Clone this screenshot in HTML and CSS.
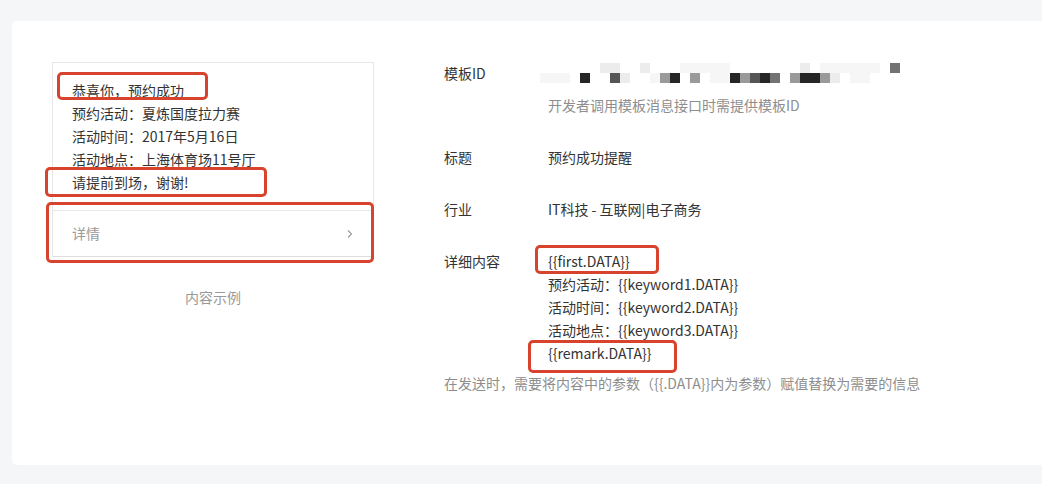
FILE: index.html
```html
<!DOCTYPE html>
<html lang="zh-CN">
<head>
<meta charset="utf-8">
<title>模板详情</title>
<link rel="stylesheet" href="styles.css">
</head>
<body>
<div class="page">
  <div class="card">
    <div class="preview-col">
      <div class="preview">
        <div class="msg">
          <div>恭喜你，预约成功</div>
          <div>预约活动：夏炼国度拉力赛</div>
          <div>活动时间：2017年5月16日</div>
          <div>活动地点：上海体育场11号厅</div>
          <div>请提前到场，谢谢!</div>
        </div>
        <div class="detail-link">
          <span>详情</span>
          <svg class="chev" width="8" height="10" viewBox="0 0 8 10"><path d="M2 1.5 L5.5 5 L2 8.5" fill="none" stroke="#9a9a9a" stroke-width="1.1"/></svg>
        </div>
      </div>
      <div class="caption">内容示例</div>
    </div>
    <div class="info">
      <div class="row">
        <div class="label">模板ID</div>
        <div class="value">
          <div class="mosaic">
            <div class="mrow">
              <i class="w"></i><i class="w"></i><i class="w"></i><i class="w"></i><i class="w"></i><i class="w"></i><i class="l2"></i><i class="l2"></i><i class="w"></i><i class="w"></i><i class="l2"></i><i class="w"></i><i class="w"></i><i class="w"></i><i class="l1"></i><i class="l1"></i><i class="l1"></i><i class="l1"></i><i class="l1"></i><i class="w"></i><i class="w"></i><i class="w"></i><i class="w"></i><i class="w"></i><i class="w"></i><i class="w"></i><i class="l2"></i><i class="w"></i><i class="l1"></i><i class="l1"></i><i class="l1"></i><i class="l1"></i><i class="l1"></i><i class="l1"></i><i class="w"></i><i class="d3"></i>
            </div>
            <div class="mrow">
              <i class="l1"></i><i class="l1"></i><i class="l1"></i><i class="w"></i><i class="d1"></i><i class="w"></i><i class="w"></i><i class="d2"></i><i class="l2"></i><i class="w"></i><i class="w"></i><i class="l1"></i><i class="d4"></i><i class="d1"></i><i class="w"></i><i class="d4"></i><i class="w"></i><i class="l1"></i><i class="l1"></i><i class="d1"></i><i class="d4"></i><i class="d2"></i><i class="d1"></i><i class="d3"></i><i class="w"></i><i class="d4"></i><i class="d1"></i><i class="d1"></i><i class="d4"></i><i class="l2"></i><i class="w"></i><i class="l1"></i><i class="l1"></i><i class="w"></i><i class="w"></i><i class="w"></i>
            </div>
          </div>
        </div>
      </div>
      <div class="row desc-row">
        <div class="label"></div>
        <div class="value muted">开发者调用模板消息接口时需提供模板ID</div>
      </div>
      <div class="row gap">
        <div class="label">标题</div>
        <div class="value">预约成功提醒</div>
      </div>
      <div class="row gap">
        <div class="label">行业</div>
        <div class="value">IT科技 - 互联网|电子商务</div>
      </div>
      <div class="row gap">
        <div class="label">详细内容</div>
        <div class="value">
          <div>{{first.DATA}}</div>
          <div>预约活动：{{keyword1.DATA}}</div>
          <div>活动时间：{{keyword2.DATA}}</div>
          <div>活动地点：{{keyword3.DATA}}</div>
          <div>{{remark.DATA}}</div>
        </div>
      </div>
      <div class="note muted">在发送时，需要将内容中的参数（{{.DATA}}内为参数）赋值替换为需要的信息</div>
    </div>
  </div>
  <div class="mark m1"></div>
  <div class="mark m2"></div>
  <div class="mark m3"></div>
  <div class="mark m4"></div>
  <div class="mark m5"></div>
</div>
</body>
</html>
```

FILE: styles.css
```css
* { box-sizing: border-box; }
html, body {
  margin: 0;
  padding: 0;
  background: #f5f6f8;
  overflow: hidden;
}
body {
  font-family: "Noto Sans CJK SC", "Noto Sans", sans-serif;
  font-size: 14px;
  line-height: 23px;
  color: #333;
}
.page {
  position: relative;
  width: 1042px;
  height: 484px;
  padding: 21px 0 0 12px;
}
.card {
  width: 1050px;
  height: 444px;
  background: #fff;
  border-radius: 5px;
  display: flex;
  padding: 41px 0 0 40px;
}
.preview-col {
  width: 322px;
  display: flex;
  flex-direction: column;
}
.preview {
  border: 1px solid #e6e6e6;
  border-bottom-color: #dedede;
}
.msg {
  padding: 16px 0 16px 19px;
}
.detail-link {
  border-top: 1px solid #e8e8e8;
  height: 46px;
  display: flex;
  align-items: center;
  justify-content: space-between;
  padding: 0 19px 0 19px;
  color: #9a9a9a;
}
.chev { display: block; }
.caption {
  text-align: center;
  color: #999;
  margin-top: 29px;
}
.info {
  margin-left: 70px;
  display: flex;
  flex-direction: column;
}
.row { display: flex; }
.label { width: 104px; flex: none; }
.value { flex: none; }
.desc-row { margin-top: 9px; }
.gap { margin-top: 29px; }
.muted { color: #8e8e8e; }
.note { margin-top: 7px; }
.mosaic {
  padding-top: 1px;
  margin-left: -8px;
}
.mrow { display: flex; height: 10px; }
.mrow i { display: block; width: 10px; height: 10px; }
.mrow .w { background: #fff; }
.mrow .l1 { background: #f6f6f6; }
.mrow .l2 { background: #ececec; }
.mrow .d1 { background: #262626; }
.mrow .d2 { background: #555; }
.mrow .d3 { background: #737373; }
.mrow .d4 { background: #9a9a9a; }
.mark {
  position: absolute;
  border: 3px solid #d8432e;
  border-radius: 5px;
}
.m1 { left: 57px; top: 72px; width: 151px; height: 28px; }
.m2 { left: 45px; top: 167px; width: 222px; height: 30px; }
.m3 { left: 46px; top: 202px; width: 328px; height: 61px; }
.m4 { left: 535px; top: 245px; width: 124px; height: 29px; }
.m5 { left: 528px; top: 340px; width: 149px; height: 33px; }
```
